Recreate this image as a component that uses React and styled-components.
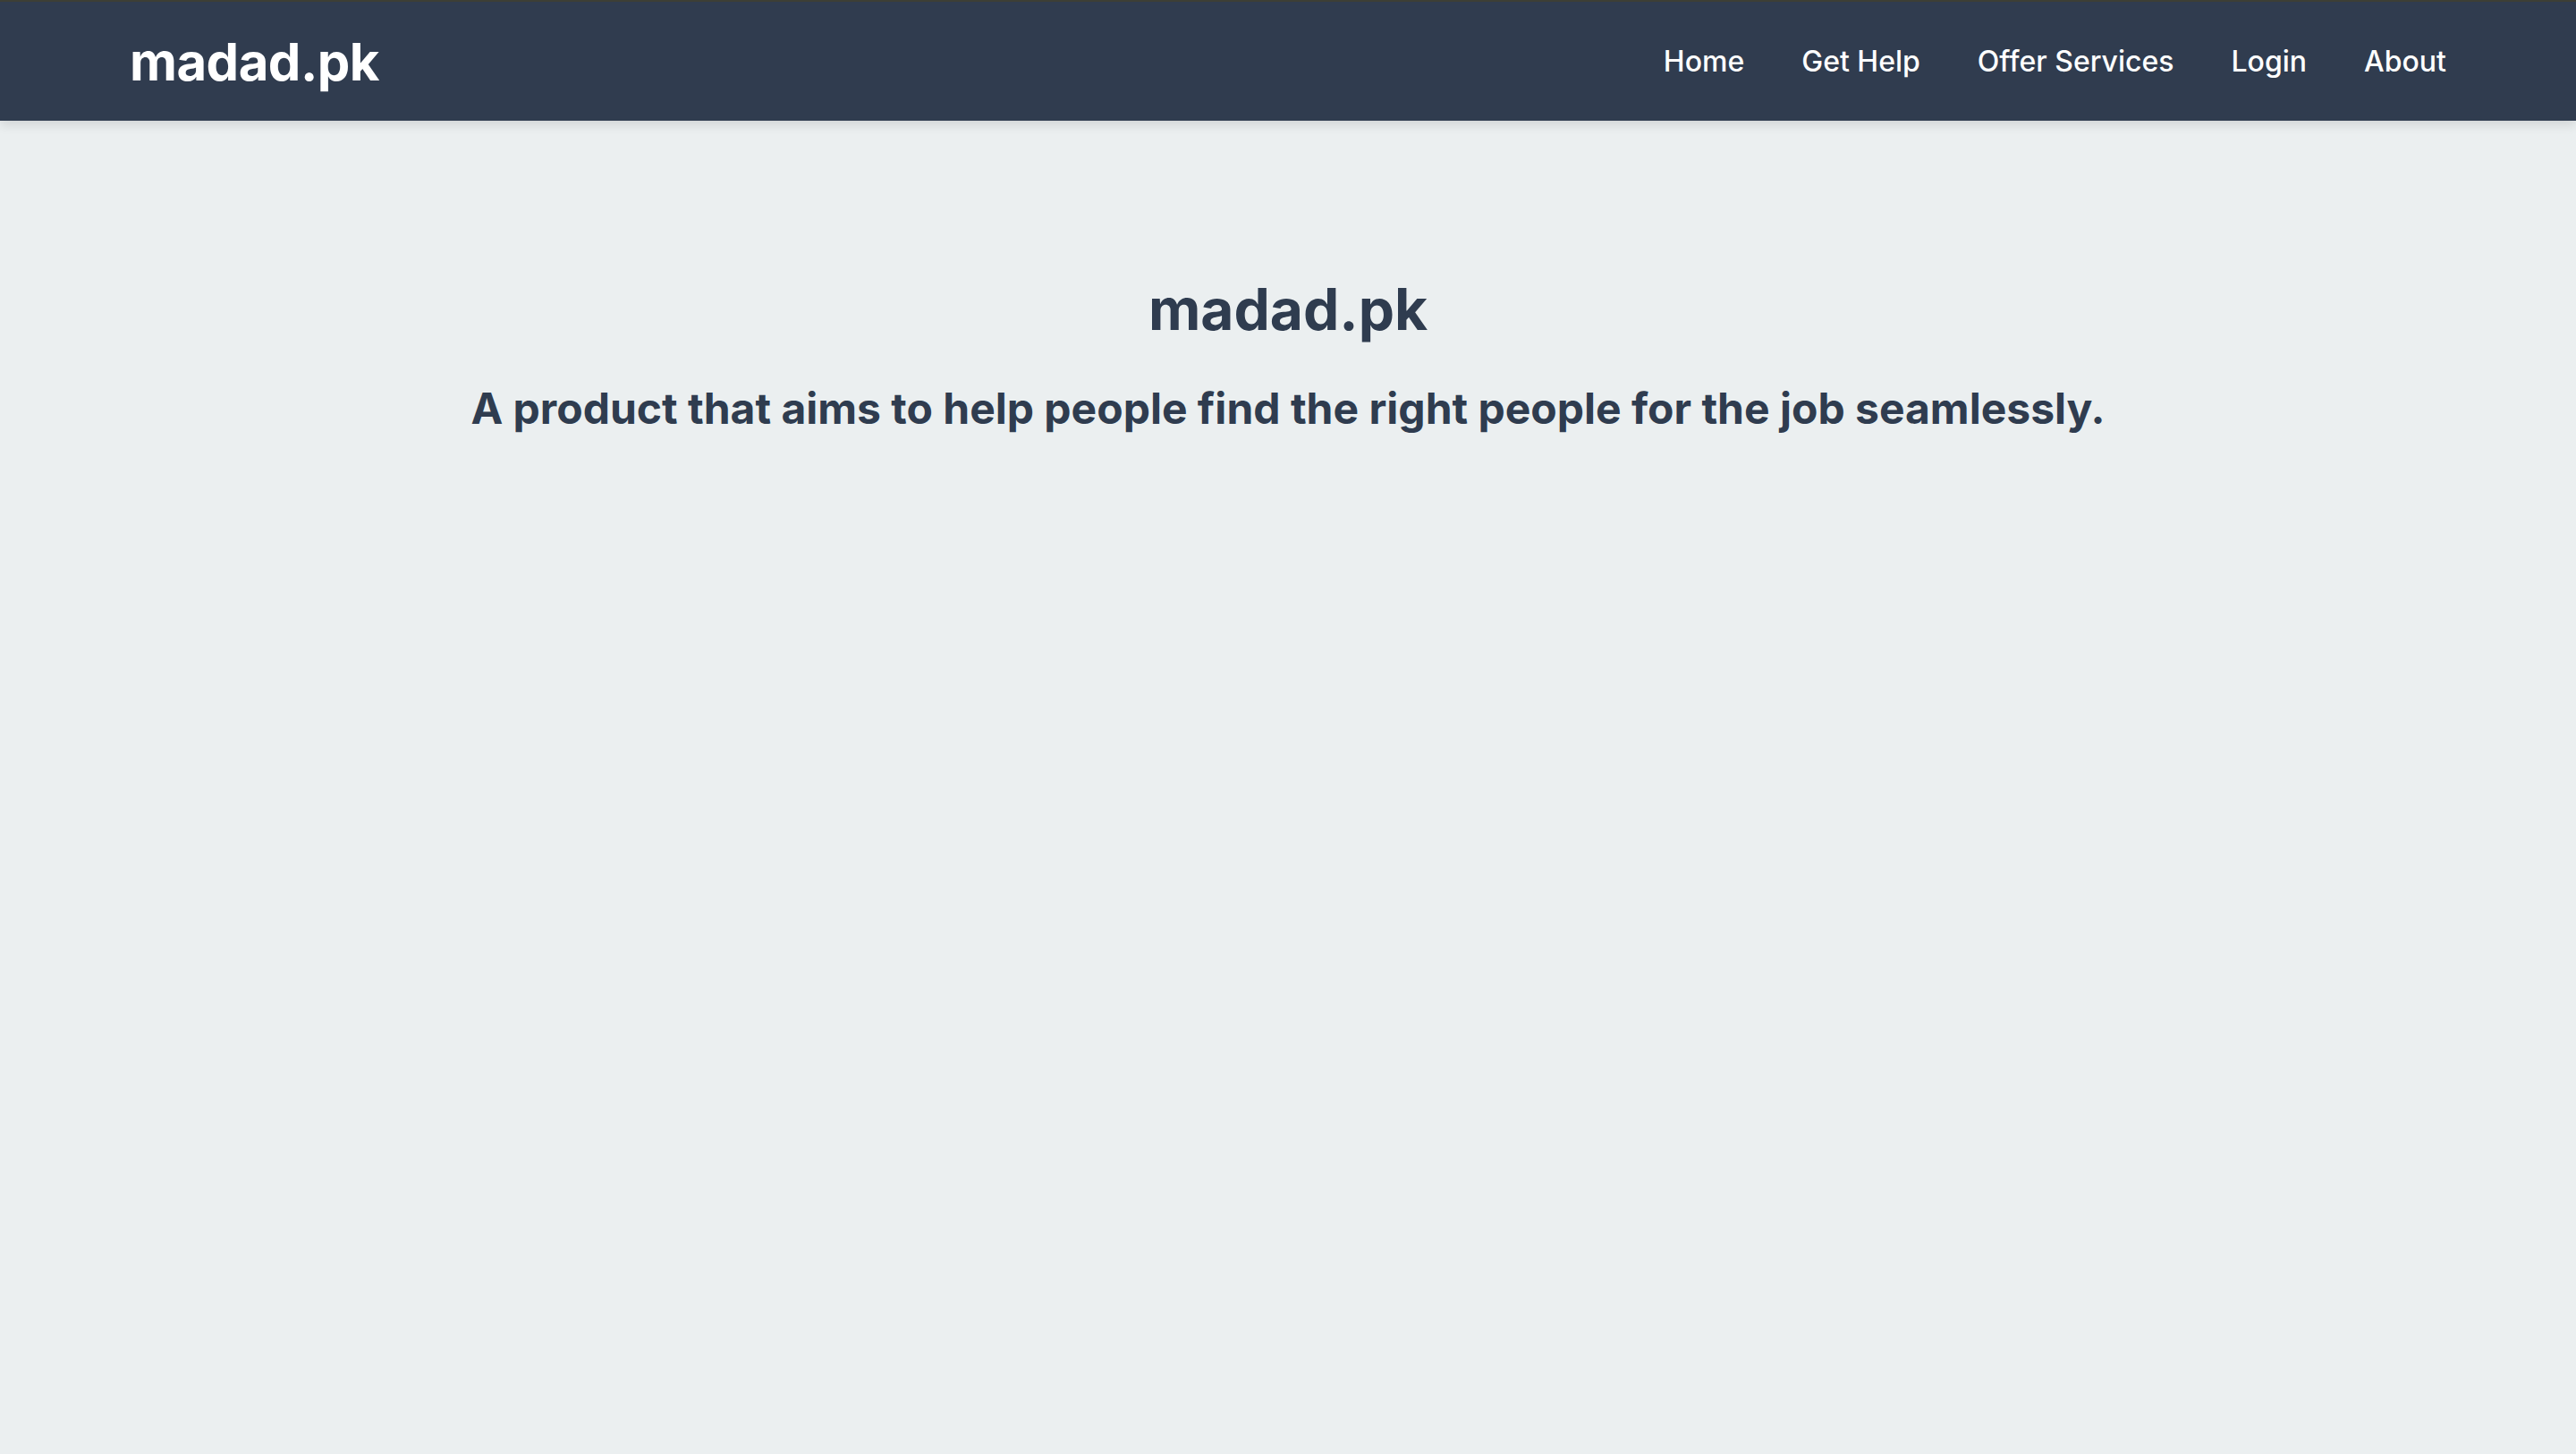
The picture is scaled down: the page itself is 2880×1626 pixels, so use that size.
import styled, { createGlobalStyle } from "styled-components";

const GlobalStyle = createGlobalStyle`
    html, body {
        margin: 0;
        padding: 0;
        background: #ebeff0;
        font-family: Inter, "Noto Sans", sans-serif;
    }
`

const Page = styled.div`
    min-height: 100vh;
    background: #ebeff0;
`

const Navbar = styled.nav`
    height: 133px;
    border-top: 2px solid #3d3f36;
    background: #303c4f;
    display: flex;
    align-items: center;
    justify-content: space-between;
    padding: 0 145px;
    box-shadow: 0 4px 12px rgba(0, 0, 0, 0.12);
    position: relative;
`

const Logo = styled.a`
    color: #ffffff;
    font-size: 58px;
    font-weight: 700;
    letter-spacing: -0.5px;
    text-decoration: none;
`

const NavLinks = styled.ul`
    display: flex;
    gap: 64px;
    list-style: none;
    margin: 0;
    padding: 0;
`

const NavLink = styled.a`
    color: #ffffff;
    font-size: 32px;
    font-weight: 500;
    text-decoration: none;
`

const Hero = styled.section`
    display: flex;
    flex-direction: column;
    align-items: center;
    padding-top: 173px;
    color: #2f3c4f;
    text-align: center;
`

const Title = styled.h1`
    font-size: 64px;
    font-weight: 700;
    margin: 0;
    line-height: 1.2;
`

const Subtitle = styled.h2`
    font-size: 48px;
    font-weight: 700;
    margin: 43px 0 0;
    line-height: 1.2;
`

const LINKS = ["Home", "Get Help", "Offer Services", "Login", "About"]

const App = () => {
  return (
    <Page>
        <GlobalStyle />
        <Navbar>
            <Logo href="#">madad.pk</Logo>
            <NavLinks>
                {
                    LINKS.map((link) => {
                        return (
                            <li key={link}>
                                <NavLink href="#">{link}</NavLink>
                            </li>
                        )
                    })
                }
            </NavLinks>
        </Navbar>
        <Hero>
            <Title>madad.pk</Title>
            <Subtitle>A product that aims to help people find the right people for the job seamlessly.</Subtitle>
        </Hero>
    </Page>
  )
}

export default App
